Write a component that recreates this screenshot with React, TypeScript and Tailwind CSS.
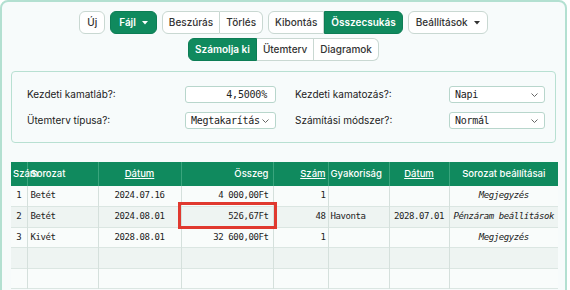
import React from "react";

const green = "bg-[#108a5e] border-[#0d7d55] text-white font-semibold";
const plain = "bg-white border-[#c9d8d2] text-[#333] font-medium";
const mono = { fontFamily: "'DejaVu Sans Mono', monospace" };

const Caret = () => (
	<svg className="ml-[6px]" width="6" height="4" viewBox="0 0 6 4" fill="currentColor">
		<path d="M0 0h6L3 3.5z" />
	</svg>
);

interface Row {
	n: string;
	kind: string;
	date: string;
	amount: string;
	count: string;
	freq: string;
	date2: string;
	note: string;
}

const rows: Row[] = [
	{ n: "1", kind: "Betét", date: "2024.07.16", amount: "4 000,00Ft", count: "1", freq: "", date2: "", note: "Megjegyzés" },
	{ n: "2", kind: "Betét", date: "2024.08.01", amount: "526,67Ft", count: "48", freq: "Havonta", date2: "2028.07.01", note: "Pénzáram beállítások" },
	{ n: "3", kind: "Kivét", date: "2028.08.01", amount: "32 600,00Ft", count: "1", freq: "", date2: "", note: "Megjegyzés" },
	{ n: "", kind: "", date: "", amount: "", count: "", freq: "", date2: "", note: "" },
	{ n: "", kind: "", date: "", amount: "", count: "", freq: "", date2: "", note: "" },
];

const Btn: React.FC<{ children: React.ReactNode; active?: boolean; className?: string }> = ({ children, active, className = "" }) => (
	<button className={`h-[23px] px-[6px] border text-[10px] flex items-center ${active ? green : plain} ${className}`}>
		{children}
	</button>
);

export default function App() {
	return (
		<div className="w-[570px] h-[290px] overflow-hidden bg-white font-['Inter',sans-serif]">
			<div className="w-[567px] h-[310px] border-2 border-[#b3e0d1] rounded-lg bg-[#f7fbfb] px-[9px] pt-[9px]">
				{/* toolbar */}
				<div className="flex justify-center gap-[5px]">
					<Btn className="rounded-md px-[7px]">Új</Btn>
					<Btn active className="rounded-md px-[8px]">
						Fájl
						<Caret />
					</Btn>
					<div className="flex">
						<Btn className="rounded-l-md">Beszúrás</Btn>
						<Btn className="rounded-r-md border-l-0">Törlés</Btn>
					</div>
					<div className="flex">
						<Btn className="rounded-l-md">Kibontás</Btn>
						<Btn active className="rounded-r-md">Összecsukás</Btn>
					</div>
					<Btn className="rounded-md px-[7px]">
						Beállítások
						<Caret />
					</Btn>
				</div>
				<div className="flex justify-center mt-[4px]">
					<Btn active className="rounded-l-md">Számolja ki</Btn>
					<Btn className="border-l-0">Ütemterv</Btn>
					<Btn className="rounded-r-md border-l-0">Diagramok</Btn>
				</div>

				{/* settings */}
				<div className="mt-[10px] h-[72px] border border-[#b8e0d2] rounded bg-[#f7fbfb] pl-[15px] pr-[13px] pt-[14px] text-[10px] text-[#222]">
					<div className="grid grid-cols-[158px_91px_19px_154px_96px] gap-y-[9px] items-center">
						<span>Kezdeti kamatláb?:</span>
						<div className="h-[17px] border border-[#b8d6cc] rounded-[3px] bg-white text-right pr-[8px] text-[10px] tracking-[-0.2px] leading-[15px]" style={mono}>
							4,5000%
						</div>
						<span />
						<span>Kezdeti kamatozás?:</span>
						<Select value="Napi" />
						<span>Ütemterv típusa?:</span>
						<Select value="Megtakarítás" />
						<span />
						<span>Számítási módszer?:</span>
						<Select value="Normál" />
					</div>
				</div>

				{/* table */}
				<div className="relative mt-[19px]">
					<table className="table-fixed border-collapse w-[547px]">
						<colgroup>
							<col className="w-[16px]" />
							<col className="w-[71px]" />
							<col className="w-[83px]" />
							<col className="w-[92px]" />
							<col className="w-[55px]" />
							<col className="w-[61px]" />
							<col className="w-[60px]" />
							<col className="w-[109px]" />
						</colgroup>
						<thead>
							<tr className="h-[24px] bg-[#108a5e] text-white text-[9.5px]">
								<th className="text-left pl-[2px] font-medium border-r border-[#3aa57d] whitespace-nowrap">Szám</th>
								<th className="text-left pl-[3px] font-medium border-r border-[#3aa57d]">Sorozat</th>
								<th className="font-medium underline border-r border-[#3aa57d]">Dátum</th>
								<th className="text-right pr-[4px] font-medium border-r border-[#3aa57d]">Összeg</th>
								<th className="text-right pr-[2px] font-medium underline border-r border-[#3aa57d]">Szám</th>
								<th className="text-left pl-[2px] font-medium border-r border-[#3aa57d] whitespace-nowrap">Gyakoriság</th>
								<th className="font-medium underline border-r border-[#3aa57d]">Dátum</th>
								<th className="font-medium whitespace-nowrap">Sorozat beállításai</th>
							</tr>
						</thead>
						<tbody className="text-[#222] text-[9px] tracking-[-0.4px]" style={mono}>
							{rows.map((r, i) => (
								<tr key={i} className={`h-[20.5px] border-b border-[#dbe6e2] ${i % 2 ? "bg-[#eef4f2]" : "bg-[#f9fcfb]"}`}>
									<td className="text-center border-r border-[#d5e0dc]">{r.n}</td>
									<td className="pl-[3px] border-r border-[#d5e0dc]">{r.kind}</td>
									<td className="text-center border-r border-[#d5e0dc]">{r.date}</td>
									<td className="text-right pr-[4px] border-r border-[#d5e0dc] whitespace-nowrap">{r.amount}</td>
									<td className="text-right pr-[2px] border-r border-[#d5e0dc]">{r.count}</td>
									<td className="pl-[2px] border-r border-[#d5e0dc]">{r.freq}</td>
									<td className="text-center border-r border-[#d5e0dc]">{r.date2}</td>
									<td className="text-center italic whitespace-nowrap">{r.note}</td>
								</tr>
							))}
						</tbody>
					</table>
					<div className="absolute left-[167px] top-[40px] w-[99px] h-[27px] border-[3px] border-[#e0392f] pointer-events-none" />
				</div>
			</div>
		</div>
	);
}

function Select({ value }: { value: string }) {
	return (
		<div className="h-[17px] border border-[#b8d6cc] rounded-[3px] bg-white flex items-center justify-between pl-[5px] pr-[6px]">
			<span className="text-[10px] tracking-[-0.3px]" style={mono}>{value}</span>
			<svg width="7" height="4" viewBox="0 0 7 4" fill="none" stroke="#666" strokeWidth="1">
				<path d="M0.5 0.5l3 3 3-3" />
			</svg>
		</div>
	);
}
